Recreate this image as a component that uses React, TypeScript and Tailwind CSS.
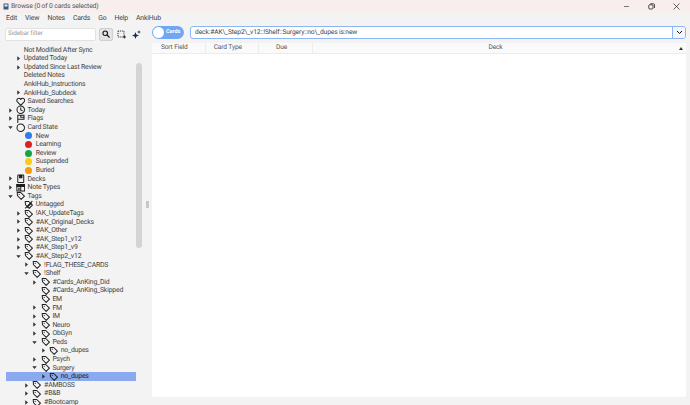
import React from "react";

type Kind = "none" | "tag" | "heart" | "clock" | "flag" | "circle" | "deck" | "note" | "untag" | "dot";
type Row = { t: string; l: number; a?: "r" | "d"; k: Kind; c?: string; sel?: boolean };

const rows: Row[] = [
  { t: "Not Modified After Sync", l: 2, k: "none" },
  { t: "Updated Today", l: 2, a: "r", k: "none" },
  { t: "Updated Since Last Review", l: 2, a: "r", k: "none" },
  { t: "Deleted Notes", l: 2, k: "none" },
  { t: "AnkiHub_Instructions", l: 2, k: "none" },
  { t: "AnkiHub_Subdeck", l: 2, a: "r", k: "none" },
  { t: "Saved Searches", l: 1, k: "heart" },
  { t: "Today", l: 1, a: "r", k: "clock" },
  { t: "Flags", l: 1, a: "r", k: "flag" },
  { t: "Card State", l: 1, a: "d", k: "circle" },
  { t: "New", l: 2, k: "dot", c: "#2f7bf0" },
  { t: "Learning", l: 2, k: "dot", c: "#e0201f" },
  { t: "Review", l: 2, k: "dot", c: "#16a34a" },
  { t: "Suspended", l: 2, k: "dot", c: "#fdcc0d" },
  { t: "Buried", l: 2, k: "dot", c: "#f59e0b" },
  { t: "Decks", l: 1, a: "r", k: "deck" },
  { t: "Note Types", l: 1, a: "r", k: "note" },
  { t: "Tags", l: 1, a: "d", k: "tag" },
  { t: "Untagged", l: 2, k: "untag" },
  { t: "!AK_UpdateTags", l: 2, a: "r", k: "tag" },
  { t: "#AK_Original_Decks", l: 2, a: "r", k: "tag" },
  { t: "#AK_Other", l: 2, a: "r", k: "tag" },
  { t: "#AK_Step1_v12", l: 2, a: "r", k: "tag" },
  { t: "#AK_Step1_v9", l: 2, a: "r", k: "tag" },
  { t: "#AK_Step2_v12", l: 2, a: "d", k: "tag" },
  { t: "!FLAG_THESE_CARDS", l: 3, a: "r", k: "tag" },
  { t: "!Shelf", l: 3, a: "d", k: "tag" },
  { t: "#Cards_AnKing_Did", l: 4, a: "r", k: "tag" },
  { t: "#Cards_AnKing_Skipped", l: 4, k: "tag" },
  { t: "EM", l: 4, k: "tag" },
  { t: "FM", l: 4, a: "r", k: "tag" },
  { t: "IM", l: 4, a: "r", k: "tag" },
  { t: "Neuro", l: 4, a: "r", k: "tag" },
  { t: "ObGyn", l: 4, a: "r", k: "tag" },
  { t: "Peds", l: 4, a: "d", k: "tag" },
  { t: "no_dupes", l: 5, a: "r", k: "tag" },
  { t: "Psych", l: 4, a: "r", k: "tag" },
  { t: "Surgery", l: 4, a: "d", k: "tag" },
  { t: "no_dupes", l: 5, a: "r", k: "tag", sel: true },
  { t: "#AMBOSS", l: 3, a: "r", k: "tag" },
  { t: "#B&B", l: 3, a: "r", k: "tag" },
  { t: "#Bootcamp", l: 3, a: "r", k: "tag" },
];

function Icon({ k, c }: { k: Kind; c?: string }) {
  const s = { width: 9.5, height: 9.5, viewBox: "0 0 16 16", fill: "none", stroke: "#1f1f1f", strokeWidth: 1.7 };
  switch (k) {
    case "dot":
      return <span className="w-[7px] h-[7px] rounded-full" style={{ backgroundColor: c }} />;
    case "tag":
      return (
        <svg {...s}>
          <path d="M2 2.5h6l6.2 6.2-5.5 5.5L2.5 8z" strokeLinejoin="round" />
          <circle cx="5.4" cy="5.6" r="1" fill="#1f1f1f" stroke="none" />
        </svg>
      );
    case "untag":
      return (
        <svg {...s}>
          <path d="M2 2.5h6l6.2 6.2-5.5 5.5L2.5 8z" strokeLinejoin="round" />
          <path d="M2 14 14 2M5 13l8-8" />
        </svg>
      );
    case "heart":
      return (
        <svg {...s}>
          <path d="M8 14 2.4 8.2C.2 5.6 2 2.2 4.8 2.2 6.4 2.2 7.4 3 8 4.2c.6-1.2 1.6-2 3.2-2 2.8 0 4.6 3.4 2.4 6z" strokeLinejoin="round" />
        </svg>
      );
    case "clock":
      return (
        <svg {...s}>
          <circle cx="8" cy="8" r="6.3" />
          <path d="M8 4v4.4l3 1.4" />
        </svg>
      );
    case "flag":
      return (
        <svg {...s}>
          <path d="M3 15V2h10.5v7H3" />
          <path d="M8 2v3.5h5.5" />
        </svg>
      );
    case "circle":
      return (
        <svg {...s}>
          <circle cx="8" cy="8" r="6.3" />
        </svg>
      );
    case "deck":
      return (
        <svg {...s}>
          <rect x="3" y="1.5" width="10" height="13" rx="1" />
          <path d="M6 1.5v5h4v-5" fill="#1f1f1f" />
        </svg>
      );
    case "note":
      return (
        <svg {...s}>
          <rect x="1.5" y="2.5" width="13" height="11" />
          <path d="M1.5 6h13M8 6v7.5M3.5 9h3M3.5 11.5h3" />
          <path d="M1.5 2.5h13V6h-13z" fill="#1f1f1f" />
        </svg>
      );
    default:
      return null;
  }
}

function Arrow({ d }: { d: "r" | "d" }) {
  return (
    <svg width="5" height="5" viewBox="0 0 10 10">
      {d === "r" ? <path d="M2.5 0.5 8 5l-5.5 4.5z" fill="#333" /> : <path d="M0.5 2.5h9L5 8z" fill="#333" />}
    </svg>
  );
}

function TreeRow({ r }: { r: Row }) {
  const indent = (r.l - 1) * 8.3 + 7;
  return (
    <div className={`h-[8.6px] flex items-center shrink-0 ${r.sel ? "bg-[#8aa9ee]" : ""}`}>
      <div className="shrink-0 flex items-center justify-center w-[5px]" style={{ marginLeft: indent - 6 + 0.5 }}>
        {r.a ? <Arrow d={r.a} /> : null}
      </div>
      {r.k !== "none" ? (
        <div className="shrink-0 w-[10px] h-[8px] flex items-center justify-center ml-[3px] mr-[2px]">
          <Icon k={r.k} c={r.c} />
        </div>
      ) : (
        <div className="shrink-0 w-[3px]" />
      )}
      <span className={`whitespace-nowrap text-[6.9px] tracking-[-0.2px] leading-[8.6px] ${r.sel ? "text-[#222]" : "text-[#444]"}`}>{r.t}</span>
    </div>
  );
}

export default function App() {
  return (
    <div className="w-[690px] h-[405px] overflow-hidden bg-[#f3f3f3] flex flex-col font-['Roboto','Liberation_Sans',sans-serif] [text-rendering:geometricPrecision]">
      <div className="h-[13px] shrink-0 bg-[#f8eeee] flex items-center pl-[3px]">
        <svg width="6" height="7" viewBox="0 0 12 14" className="mr-[2px]">
          <rect x="1" y="1" width="10" height="12" rx="1" fill="#3d5a80" />
          <rect x="3" y="3" width="6" height="4" fill="#e8edf5" />
        </svg>
        <span className="text-[6.8px] tracking-[-0.15px] text-[#555] whitespace-nowrap">Browse (0 of 0 cards selected)</span>
        <div className="ml-auto flex items-center h-full pb-[1px]">
          <div className="w-[25px] flex justify-center">
            <div className="w-[5px] h-px bg-[#777]" />
          </div>
          <div className="w-[25px] flex justify-center">
            <svg width="7" height="7" viewBox="0 0 14 14" fill="none" stroke="#222" strokeWidth="1.6">
              <rect x="1.5" y="3.5" width="8.5" height="8.5" rx="2" />
              <path d="M4.5 1.5h6a2.5 2.5 0 0 1 2.5 2.5v6" />
            </svg>
          </div>
          <div className="w-[25px] mr-[1px] flex justify-center">
            <svg width="7" height="7" viewBox="0 0 14 14" stroke="#222" strokeWidth="1.4">
              <path d="M1 1l12 12M13 1 1 13" />
            </svg>
          </div>
        </div>
      </div>

      <div className="h-[11px] shrink-0 flex items-center pl-[6px] gap-[8px] text-[6.9px] tracking-[-0.15px] text-[#444]">
        <span>Edit</span>
        <span>View</span>
        <span>Notes</span>
        <span>Cards</span>
        <span>Go</span>
        <span>Help</span>
        <span>AnkiHub</span>
      </div>

      <div className="flex-1 flex min-h-0">
        <div className="w-[143px] shrink-0 flex flex-col min-h-0">
          <div className="h-[21.7px] shrink-0 flex items-start pt-[4px] pl-[5px]">
            <div className="w-[91px] h-[12.5px] bg-white border border-[#e2e2e2] rounded-[2px] flex items-center pl-[2px] text-[6.4px] tracking-[-0.1px] text-[#9a9a9a]">
              Sidebar filter
            </div>
            <div className="ml-[3px] w-[14px] h-[12.5px] bg-[#e3e3e3] border border-[#cfcfcf] rounded-[2px] flex items-center justify-center">
              <svg width="8" height="8" viewBox="0 0 16 16" fill="none" stroke="#111" strokeWidth="2.2">
                <circle cx="6.5" cy="6.5" r="4.5" />
                <path d="M10 10l5 5" />
              </svg>
            </div>
            <div className="ml-[3px] w-[11px] h-[12.5px] flex items-center justify-center">
              <svg width="9" height="9" viewBox="0 0 18 18" fill="none" stroke="#1a1a1a" strokeWidth="1.7" strokeDasharray="2.2 1.6">
                <rect x="2" y="2" width="12" height="12" />
                <path d="M15 11v6M12 14h6" strokeDasharray="none" />
              </svg>
            </div>
            <div className="ml-[4px] w-[11px] h-[12.5px] flex items-center justify-center">
              <svg width="9" height="9" viewBox="0 0 18 18" fill="#1a2a44">
                <path d="M7 4l1.8 5.2L14 11l-5.2 1.8L7 18l-1.8-5.2L0 11l5.2-1.8z" />
                <path d="M14 0l1 3 3 1-3 1-1 3-1-3-3-1 3-1z" />
              </svg>
            </div>
          </div>
          <div className="flex-1 flex min-h-0 pl-[6px] overflow-hidden">
            <div className="w-[130px] shrink-0 flex flex-col overflow-hidden">
              {rows.map((r, i) => (
                <TreeRow key={i} r={r} />
              ))}
            </div>
            <div className="w-[7px] shrink-0 pt-[17px]">
              <div className="w-[6px] h-[185px] rounded-full bg-[#d4d4d4]" />
            </div>
          </div>
        </div>

        <div className="w-[8px] shrink-0 flex items-center justify-center pb-[8px]">
          <div className="w-[3px] h-[7px] bg-[#c8c8c8] mt-[-12px]" />
        </div>

        <div className="flex-1 flex flex-col pr-[4px] pb-[8px] pl-[1px] min-w-0">
          <div className="h-[19px] shrink-0 flex items-start pt-[2px]">
            <div className="w-[32px] h-[12.5px] rounded-full bg-[#72a6f4] flex items-center pl-[1px]">
              <div className="w-[11px] h-[11px] rounded-full bg-white" />
              <span className="ml-[2px] text-[5.5px] font-bold text-white">Cards</span>
            </div>
            <div className="ml-[6px] flex-1 h-[12.5px] flex border border-[#8db5f4] rounded-[3px] bg-white overflow-hidden">
              <div className="flex-1 flex items-center pl-[4px] text-[6.7px] tracking-[-0.13px] text-[#444] whitespace-nowrap">
                deck:#AK\_Step2\_v12::!Shelf::Surgery::no\_dupes is:new
              </div>
              <div className="w-[13px] bg-[#f3f7fd] border-l border-[#8db5f4] flex items-center justify-center">
                <svg width="7" height="5" viewBox="0 0 14 10" fill="none" stroke="#111" strokeWidth="2">
                  <path d="M2 2l5 5 5-5" />
                </svg>
              </div>
            </div>
          </div>
          <div className="flex-1 bg-white rounded-[2px] flex flex-col min-h-0">
            <div className="h-[10.5px] shrink-0 bg-[#fafafa] border-b border-[#ececec] flex text-[6.6px] tracking-[-0.12px] text-[#555]">
              <div className="w-[53.5px] pr-[8px] border-r border-[#ececec] flex items-center justify-center">Sort Field</div>
              <div className="w-[53.5px] pr-[8px] border-r border-[#ececec] flex items-center justify-center">Card Type</div>
              <div className="w-[54px] pr-[8px] border-r border-[#ececec] flex items-center justify-center">Due</div>
              <div className="flex-1 pr-[8px] relative flex items-center justify-center">
                Deck
                <svg width="4" height="3" viewBox="0 0 8 6" className="absolute right-[3px] top-[4px]">
                  <path d="M4 0l4 6H0z" fill="#333" />
                </svg>
              </div>
            </div>
          </div>
        </div>
      </div>
    </div>
  );
}
